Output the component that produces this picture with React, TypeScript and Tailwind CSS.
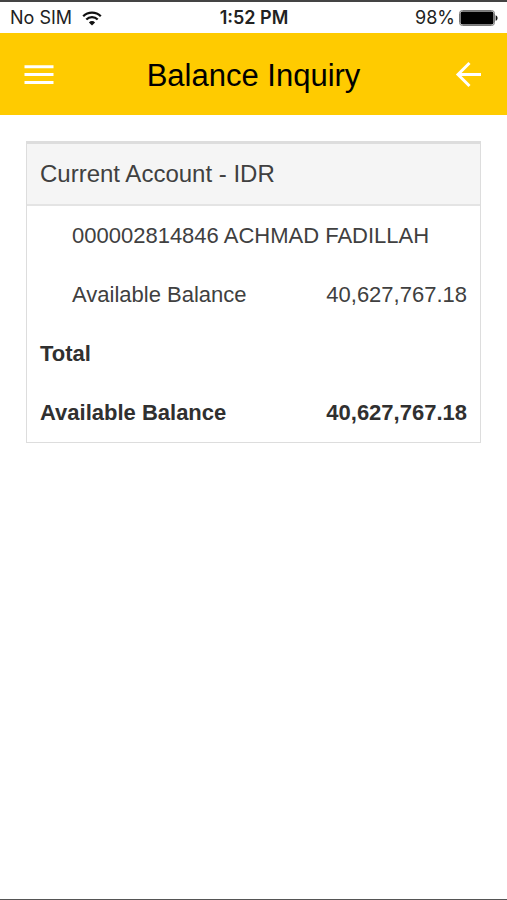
type Row = {
  label: string;
  value?: string;
  kind: "account" | "total";
};

const rows: Row[] = [
  { label: "000002814846 ACHMAD FADILLAH", kind: "account" },
  { label: "Available Balance", value: "40,627,767.18", kind: "account" },
  { label: "Total", kind: "total" },
  { label: "Available Balance", value: "40,627,767.18", kind: "total" },
];

function WifiIcon() {
  return (
    <svg width="20" height="15" viewBox="0 0 20 15" fill="none" aria-hidden="true">
      <path d="M1.2 5.2a12.6 12.6 0 0 1 17.6 0" stroke="#111" strokeWidth="2.3" />
      <path d="M4.3 8.5a8.1 8.1 0 0 1 11.4 0" stroke="#111" strokeWidth="2.3" />
      <path d="M10 14.6 6.9 11.4a4.4 4.4 0 0 1 6.2 0z" fill="#111" />
    </svg>
  );
}

function BatteryIcon() {
  return (
    <svg width="39" height="16" viewBox="0 0 39 16" aria-hidden="true">
      <rect x="0.5" y="0.5" width="35" height="15" rx="3" fill="#fff" stroke="#777" />
      <rect x="1.5" y="1.5" width="33" height="13" rx="2" fill="#000" />
      <path d="M36.6 5.2c2.6.7 2.6 4.9 0 5.6z" fill="#111" />
    </svg>
  );
}

function StatusBar() {
  return (
    <div className="grid h-[33px] grid-cols-3 items-center border-t-2 border-[#444] bg-white pt-px pr-[9px] pl-[10px] font-[Inter,sans-serif] text-[18px] leading-none text-[#222]">
      <div className="flex items-center gap-[10px]">
        <span>No SIM</span>
        <WifiIcon />
      </div>
      <div className="text-center font-semibold">1:52 PM</div>
      <div className="flex items-center justify-end gap-1">
        <span>98%</span>
        <BatteryIcon />
      </div>
    </div>
  );
}

function Header() {
  return (
    <header className="flex h-[82px] items-center justify-between bg-[#ffcb00] px-6 pt-[2px]">
      <button type="button" aria-label="Menu" className="text-white">
        <svg width="30" height="30" viewBox="0 0 30 30" stroke="currentColor" strokeWidth="3">
          <path d="M0.5 6.8h29M0.5 14.6h29M0.5 22.4h29" />
        </svg>
      </button>
      <h1 className="text-[31px] leading-none text-black">Balance Inquiry</h1>
      <button type="button" aria-label="Back" className="text-white">
        <svg
          width="30"
          height="30"
          viewBox="0 0 30 30"
          fill="none"
          stroke="currentColor"
          strokeWidth="3"
        >
          <path d="M28 14.5H5M16.5 3 5 14.5 16.5 26" />
        </svg>
      </button>
    </header>
  );
}

function BalanceCard() {
  return (
    <section className="border border-t-[3px] border-[#ddd] text-[#404040]">
      <h2 className="border-b-2 border-[#e4e4e4] bg-[#f5f5f5] px-[13px] text-[24px] leading-[60px]">
        Current Account - IDR
      </h2>
      <table className="w-full text-left text-[22px] leading-[59px]">
        <tbody>
          {rows.map((row, i) => (
            <tr key={i} className={row.kind === "total" ? "font-bold text-[#303030]" : ""}>
              <th
                scope="row"
                colSpan={row.value ? 1 : 2}
                className={
                  row.kind === "total"
                    ? "p-0 pl-[13px] font-bold"
                    : "p-0 pl-[45px] font-normal"
                }
              >
                {row.label}
              </th>
              {row.value && <td className="p-0 pr-[13px] text-right">{row.value}</td>}
            </tr>
          ))}
        </tbody>
      </table>
    </section>
  );
}

function App() {
  return (
    <div className="flex min-h-screen flex-col border-b border-[#555] bg-white font-['Liberation_Sans',Arial,sans-serif]">
      <StatusBar />
      <Header />
      <main className="flex-1 p-[26px]">
        <BalanceCard />
      </main>
    </div>
  );
}

export default App;
